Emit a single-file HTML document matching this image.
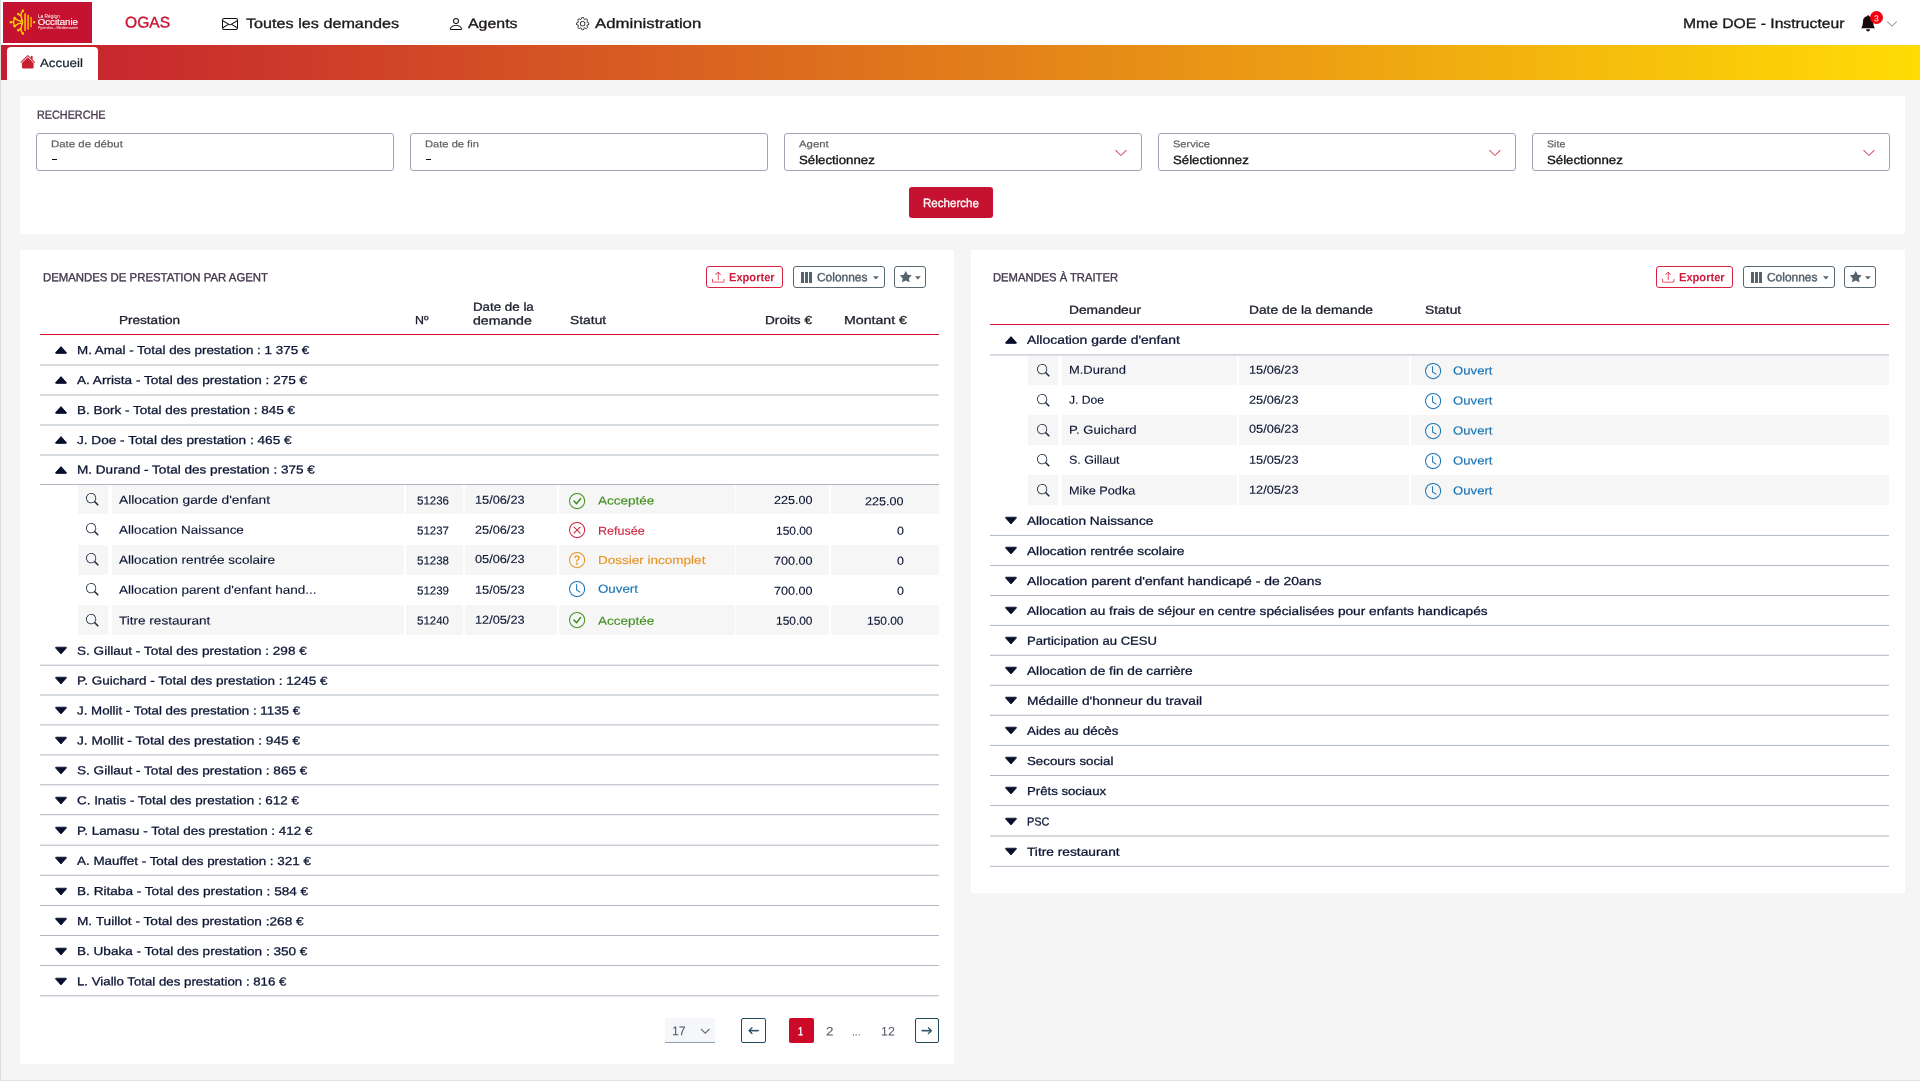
<!DOCTYPE html>
<html lang="fr"><head><meta charset="utf-8"><title>OGAS - Accueil</title><style>
*{box-sizing:border-box}
html,body{margin:0;padding:0}
body{width:1920px;height:1081px;position:relative;overflow:hidden;background:#f5f5f5;font-family:"Liberation Sans", sans-serif;color:#0b1432}
#app{position:absolute;left:0;top:0;width:1920px;height:1081px;background:#f5f5f5;will-change:transform}
.b,.t,.i{position:absolute}
.t{white-space:pre;line-height:20px;height:20px;font-kerning:normal;transform-origin:0 0}
.i{display:block;overflow:visible}
.ln{position:absolute;background:#d6dbe1;height:2px}
.sh{position:absolute;background:#f6f6f6}
</style></head><body>
<div id="app">
<header>
<div class="b" style="left:0.00px;top:0.00px;width:1920.00px;height:45.00px;background:#fff"></div>
<div class="b" style="left:3.00px;top:2.00px;width:89.00px;height:41.00px;background:#c41230"></div>
<svg class="i" style="left:3px;top:2px" width="89" height="41" viewBox="3 2 89 41">
<g fill="none" stroke="#ffd400" stroke-width="1.35" stroke-linecap="round" stroke-linejoin="round">
<path d="M22.9 10.8 L21.2 13.2 Q20.6 14.6 21.2 16.6 L21.9 19.6 Q22.2 21.2 20.6 21.2 L18 20.4 L14.7 18.1"/>
<path d="M18.3 14.1 L20.9 16"/>
<path d="M22.9 33.5 L21.2 31.1 Q20.6 29.7 21.2 27.7 L21.9 24.7 Q22.2 23.1 20.6 23.1 L18 23.9 L14.7 26.2"/>
<path d="M18.3 30.2 L20.9 28.3"/>
<path d="M11 22.15 L13.6 22.15 M14.7 18.1 L13.4 22.15 L14.7 26.2"/>
<path d="M21.6 19.5 L22.6 22.15 L21.6 24.8"/>
</g>
<g fill="#ffd400"><circle cx="22.9" cy="10.8" r="1.25"/><circle cx="18.2" cy="14" r="1.2"/><circle cx="14.6" cy="18" r="1.2"/><circle cx="10.9" cy="22.15" r="1.25"/><circle cx="14.6" cy="26.3" r="1.2"/><circle cx="18.2" cy="30.3" r="1.2"/><circle cx="22.9" cy="33.5" r="1.25"/><circle cx="34.1" cy="22.25" r="1.15"/></g>
<g fill="#f5a400"><rect x="24.1" y="13.3" width="1.9" height="17.7"/><rect x="27.2" y="14.8" width="1.8" height="14.8"/><rect x="30.3" y="16.9" width="1.6" height="10.2"/></g>
<g fill="#fff" font-family="Liberation Sans, sans-serif">
<text x="37.9" y="18.05" font-size="4.7" textLength="22" lengthAdjust="spacingAndGlyphs">La Région</text>
<text x="37.8" y="25.05" font-size="8.4" stroke="#fff" stroke-width="0.14" textLength="40.2" lengthAdjust="spacingAndGlyphs">Occitanie</text>
<text x="37.9" y="29.45" font-size="3.4" textLength="40.2" lengthAdjust="spacingAndGlyphs">Pyrénées - Méditerranée</text>
</g></svg>
<span class="t" style="left:125.10px;top:12px;font-size:15.4px;transform:translateY(0.60px) scaleX(1.0138) rotate(.03deg);color:#c8102e;-webkit-text-stroke:0.35px currentColor;">OGAS</span>
<nav>
<svg class="i" style="left:222.00px;top:16.30px" width="16" height="16" viewBox="0 0 16 16" fill="#111" ><path d="M0 4a2 2 0 0 1 2-2h12a2 2 0 0 1 2 2v8a2 2 0 0 1-2 2H2a2 2 0 0 1-2-2V4Zm2-1a1 1 0 0 0-1 1v.217l7 4.2 7-4.2V4a1 1 0 0 0-1-1H2Zm13 2.383-4.708 2.825L15 11.105V5.383Zm-.034 6.876-5.64-3.471L8 9.583l-1.326-.795-5.64 3.47A1 1 0 0 0 2 13h12a1 1 0 0 0 .966-.741ZM1 11.105l4.708-2.897L1 5.383v5.722Z"/></svg>
<span class="t" style="left:246.30px;top:13px;font-size:13.7px;transform:translateY(0.95px) scaleX(1.1828) rotate(.03deg);color:#1d1718;-webkit-text-stroke:0.32px currentColor;">Toutes les demandes</span>
<svg class="i" style="left:448.20px;top:15.70px" width="16" height="16" viewBox="0 0 16 16" fill="#111" ><path d="M8 8a3 3 0 1 0 0-6 3 3 0 0 0 0 6Zm2-3a2 2 0 1 1-4 0 2 2 0 0 1 4 0Zm4 8c0 1-1 1-1 1H3s-1 0-1-1 1-4 6-4 6 3 6 4Zm-1-.004c-.001-.246-.154-.986-.832-1.664C11.516 10.68 10.289 10 8 10c-2.29 0-3.516.68-4.168 1.332-.678.678-.83 1.418-.832 1.664h10Z"/></svg>
<span class="t" style="left:468.20px;top:13px;font-size:13.7px;transform:translateY(0.95px) scaleX(1.1636) rotate(.03deg);color:#1d1718;-webkit-text-stroke:0.32px currentColor;">Agents</span>
<svg class="i" style="left:575.60px;top:16.85px" width="13.3" height="13.3" viewBox="0 0 16 16" fill="#222" ><path d="M8 4.754a3.246 3.246 0 1 0 0 6.492 3.246 3.246 0 0 0 0-6.492zM5.754 8a2.246 2.246 0 1 1 4.492 0 2.246 2.246 0 0 1-4.492 0z"/><path d="M9.796 1.343c-.527-1.79-3.065-1.79-3.592 0l-.094.319a.873.873 0 0 1-1.255.52l-.292-.16c-1.64-.892-3.433.902-2.54 2.541l.159.292a.873.873 0 0 1-.52 1.255l-.319.094c-1.79.527-1.79 3.065 0 3.592l.319.094a.873.873 0 0 1 .52 1.255l-.16.292c-.892 1.64.901 3.434 2.541 2.54l.292-.159a.873.873 0 0 1 1.255.52l.094.319c.527 1.79 3.065 1.79 3.592 0l.094-.319a.873.873 0 0 1 1.255-.52l.292.16c1.64.893 3.434-.902 2.54-2.541l-.159-.292a.873.873 0 0 1 .52-1.255l.319-.094c1.79-.527 1.79-3.065 0-3.592l-.319-.094a.873.873 0 0 1-.52-1.255l.16-.292c.893-1.64-.902-3.433-2.541-2.54l-.292.159a.873.873 0 0 1-1.255-.52l-.094-.319zm-2.633.283c.246-.835 1.428-.835 1.674 0l.094.319a1.873 1.873 0 0 0 2.693 1.115l.291-.16c.764-.415 1.6.42 1.184 1.185l-.159.292a1.873 1.873 0 0 0 1.116 2.692l.318.094c.835.246.835 1.428 0 1.674l-.319.094a1.873 1.873 0 0 0-1.115 2.693l.16.291c.415.764-.42 1.6-1.185 1.184l-.291-.159a1.873 1.873 0 0 0-2.693 1.116l-.094.318c-.246.835-1.428.835-1.674 0l-.094-.319a1.873 1.873 0 0 0-2.692-1.115l-.292.16c-.764.415-1.6-.42-1.184-1.185l.159-.291A1.873 1.873 0 0 0 1.945 8.93l-.319-.094c-.835-.246-.835-1.428 0-1.674l.319-.094A1.873 1.873 0 0 0 3.06 4.377l-.16-.292c-.415-.764.42-1.6 1.185-1.184l.292.159a1.873 1.873 0 0 0 2.692-1.115l.094-.319z"/></svg>
<span class="t" style="left:595.00px;top:13px;font-size:13.7px;transform:translateY(0.95px) scaleX(1.2256) rotate(.03deg);color:#1d1718;-webkit-text-stroke:0.32px currentColor;">Administration</span>
</nav>
<span class="t" style="left:1682.50px;top:13px;font-size:13.7px;transform:translateY(0.95px) scaleX(1.1477) rotate(.03deg);color:#1d1718;-webkit-text-stroke:0.32px currentColor;">Mme DOE - Instructeur</span>
<svg class="i" style="left:1859.90px;top:14.60px" width="16.2" height="16.6" viewBox="0 0 16 16" fill="#150a0a" ><path d="M8 16a2 2 0 0 0 2-2H6a2 2 0 0 0 2 2zm.995-14.901a1 1 0 1 0-1.99 0A5.002 5.002 0 0 0 3 6c0 1.098-.5 6-2 7h14c-1.5-1-2-5.902-2-7 0-2.42-1.72-4.44-4.005-4.901z"/></svg>
<div class="b" style="left:1870.00px;top:11.00px;width:13.00px;height:13.00px;background:#f5000f;border-radius:50%"></div>
<span class="t" style="left:1874.30px;top:8px;font-size:8.5px;transform:translateY(0.20px) scaleX(0.9927) rotate(.03deg);color:#fff;">3</span>
<svg class="i" style="left:1886.20px;top:17.90px" width="12" height="12" viewBox="0 0 16 16" fill="#707b88" ><path fill-rule="evenodd" d="M1.646 4.646a.5.5 0 0 1 .708 0L8 10.293l5.646-5.647a.5.5 0 0 1 .708.708l-6 6a.5.5 0 0 1-.708 0l-6-6a.5.5 0 0 1 0-.708z"/></svg>
<div class="b" style="left:1.00px;top:45.00px;width:1919.00px;height:35.00px;background:linear-gradient(90deg,#c41d30,#ffdc05)"></div>
<div class="b" style="left:7.00px;top:47.00px;width:91.00px;height:33.00px;background:#fff;border-radius:4px 4px 0 0"></div>
<svg class="i" style="left:19.60px;top:53.80px" width="15.6" height="15.6" viewBox="0 0 16 16" fill="#c8202f" ><path fill-rule="evenodd" d="m8 3.293 6 6V13.5a1.5 1.5 0 0 1-1.5 1.5h-9A1.5 1.5 0 0 1 2 13.5V9.293l6-6zm5-.793V6l-2-2V2.5a.5.5 0 0 1 .5-.5h1a.5.5 0 0 1 .5.5z"/><path fill-rule="evenodd" d="M7.293 1.5a1 1 0 0 1 1.414 0l6.647 6.646a.5.5 0 0 1-.708.708L8 2.207 1.354 8.854a.5.5 0 1 1-.708-.708L7.293 1.5z"/></svg>
<span class="t" style="left:40.30px;top:52px;font-size:12px;transform:translateY(0.90px) scaleX(1.1089) rotate(.03deg);color:#152030;-webkit-text-stroke:0.2px currentColor;">Accueil</span>
</header>
<div class="b" style="left:0.00px;top:0.00px;width:1.00px;height:1081.00px;background:#dcdcdc"></div>
<div class="b" style="left:0.00px;top:1080.00px;width:1920.00px;height:1.00px;background:#e0e0e0"></div>
<section>
<div class="b" style="left:20.00px;top:96.00px;width:1885.00px;height:138.00px;background:#fff"></div>
<span class="t" style="left:36.60px;top:104px;font-size:11.7px;transform:translateY(0.75px) scaleX(0.9253) rotate(.03deg);color:#47394f;-webkit-text-stroke:0.3px currentColor;">RECHERCHE</span>
<div class="b" style="left:36.00px;top:133.00px;width:358.00px;height:37.50px;background:#fff;border:1px solid #a2a0bb;border-radius:3px"></div>
<span class="t" style="left:50.80px;top:134px;font-size:9.7px;transform:translateY(0.20px) scaleX(1.1811) rotate(.03deg);color:#606060;-webkit-text-stroke:0.2px currentColor;">Date de début</span>
<div class="b" style="left:51.90px;top:158.90px;width:5.20px;height:1.40px;background:#111"></div>
<div class="b" style="left:410.00px;top:133.00px;width:358.00px;height:37.50px;background:#fff;border:1px solid #a2a0bb;border-radius:3px"></div>
<span class="t" style="left:425.30px;top:134px;font-size:9.7px;transform:translateY(0.20px) scaleX(1.1503) rotate(.03deg);color:#606060;-webkit-text-stroke:0.2px currentColor;">Date de fin</span>
<div class="b" style="left:425.90px;top:158.90px;width:5.20px;height:1.40px;background:#111"></div>
<div class="b" style="left:784.00px;top:133.00px;width:358.00px;height:37.50px;background:#fff;border:1px solid #a2a0bb;border-radius:3px"></div>
<span class="t" style="left:799.20px;top:134px;font-size:9.7px;transform:translateY(0.20px) scaleX(1.1726) rotate(.03deg);color:#606060;-webkit-text-stroke:0.2px currentColor;">Agent</span>
<span class="t" style="left:799.20px;top:149px;font-size:12px;transform:translateY(0.90px) scaleX(1.1030) rotate(.03deg);color:#141414;-webkit-text-stroke:0.35px currentColor;">Sélectionnez</span>
<svg class="i" style="left:1113.95px;top:146.45px" width="13.9" height="13.9" viewBox="0 0 16 16" fill="#d8334f" ><path fill-rule="evenodd" d="M1.646 4.646a.5.5 0 0 1 .708 0L8 10.293l5.646-5.647a.5.5 0 0 1 .708.708l-6 6a.5.5 0 0 1-.708 0l-6-6a.5.5 0 0 1 0-.708z"/></svg>
<div class="b" style="left:1158.00px;top:133.00px;width:358.00px;height:37.50px;background:#fff;border:1px solid #a2a0bb;border-radius:3px"></div>
<span class="t" style="left:1173.20px;top:134px;font-size:9.7px;transform:translateY(0.20px) scaleX(1.1389) rotate(.03deg);color:#606060;-webkit-text-stroke:0.2px currentColor;">Service</span>
<span class="t" style="left:1173.20px;top:149px;font-size:12px;transform:translateY(0.90px) scaleX(1.1030) rotate(.03deg);color:#141414;-webkit-text-stroke:0.35px currentColor;">Sélectionnez</span>
<svg class="i" style="left:1487.95px;top:146.45px" width="13.9" height="13.9" viewBox="0 0 16 16" fill="#d8334f" ><path fill-rule="evenodd" d="M1.646 4.646a.5.5 0 0 1 .708 0L8 10.293l5.646-5.647a.5.5 0 0 1 .708.708l-6 6a.5.5 0 0 1-.708 0l-6-6a.5.5 0 0 1 0-.708z"/></svg>
<div class="b" style="left:1532.00px;top:133.00px;width:358.00px;height:37.50px;background:#fff;border:1px solid #a2a0bb;border-radius:3px"></div>
<span class="t" style="left:1547.20px;top:134px;font-size:9.7px;transform:translateY(0.20px) scaleX(1.0956) rotate(.03deg);color:#606060;-webkit-text-stroke:0.2px currentColor;">Site</span>
<span class="t" style="left:1547.20px;top:149px;font-size:12px;transform:translateY(0.90px) scaleX(1.1030) rotate(.03deg);color:#141414;-webkit-text-stroke:0.35px currentColor;">Sélectionnez</span>
<svg class="i" style="left:1861.95px;top:146.45px" width="13.9" height="13.9" viewBox="0 0 16 16" fill="#d8334f" ><path fill-rule="evenodd" d="M1.646 4.646a.5.5 0 0 1 .708 0L8 10.293l5.646-5.647a.5.5 0 0 1 .708.708l-6 6a.5.5 0 0 1-.708 0l-6-6a.5.5 0 0 1 0-.708z"/></svg>
<div class="b" style="left:909.00px;top:187.00px;width:84.00px;height:31.00px;background:#c41230;border-radius:3px"></div>
<span class="t" style="left:922.50px;top:193px;font-size:12px;transform:translateY(0.10px) scaleX(0.9650) rotate(.03deg);color:#fff;-webkit-text-stroke:0.3px currentColor;">Recherche</span>
</section>
<section>
<div class="b" style="left:20.00px;top:250.00px;width:934.00px;height:814.00px;background:#fff"></div>
<span class="t" style="left:43.00px;top:267px;font-size:11.7px;transform:translateY(0.20px) scaleX(0.9732) rotate(.03deg);color:#43374b;-webkit-text-stroke:0.35px currentColor;">DEMANDES DE PRESTATION PAR AGENT</span>
<div class="b" style="left:706.00px;top:266.00px;width:76.50px;height:22.00px;border:1px solid #d8213f;border-radius:3px;background:#fff"></div>
<svg class="i" style="left:711.80px;top:270.60px" width="12.4" height="12.4" viewBox="0 0 16 16" fill="#d8213f" ><path d="M.5 9.9a.5.5 0 0 1 .5.5v2.5a1 1 0 0 0 1 1h12a1 1 0 0 0 1-1v-2.5a.5.5 0 0 1 1 0v2.5a2 2 0 0 1-2 2H2a2 2 0 0 1-2-2v-2.5a.5.5 0 0 1 .5-.5z"/><path d="M7.646 1.146a.5.5 0 0 1 .708 0l3 3a.5.5 0 0 1-.708.708L8.500 2.707V11.5a.5.5 0 0 1-1 0V2.707L5.354 4.854a.5.5 0 1 1-.708-.708l3-3z"/></svg>
<span class="t" style="left:729.30px;top:267px;font-size:12px;transform:translateY(0.30px) scaleX(0.9259) rotate(.03deg);color:#cf1838;font-weight:700;">Exporter</span>
<div class="b" style="left:793.00px;top:266.00px;width:92.00px;height:22.00px;border:1px solid #5a6872;border-radius:3px;background:#fff"></div>
<div class="b" style="left:801.10px;top:272.00px;width:2.70px;height:10.70px;background:#55636d"></div>
<div class="b" style="left:805.15px;top:272.00px;width:2.70px;height:10.70px;background:#55636d"></div>
<div class="b" style="left:809.20px;top:272.00px;width:2.70px;height:10.70px;background:#55636d"></div>
<span class="t" style="left:817.00px;top:267px;font-size:12px;transform:translateY(0.30px) scaleX(0.9960) rotate(.03deg);color:#4f5d67;-webkit-text-stroke:0.4px currentColor;">Colonnes</span>
<svg class="i" style="left:872.9px;top:275.8px" width="5.8" height="3.6" viewBox="0 0 7 4"><path d="M0 0h7L3.5 4z" fill="#55636d"/></svg>
<div class="b" style="left:894.00px;top:266.00px;width:32.00px;height:22.00px;border:1px solid #5a6872;border-radius:3px;background:#fff"></div>
<svg class="i" style="left:900.00px;top:270.70px" width="11.5" height="11.5" viewBox="0 0 16 16" fill="#55636d" ><path d="M3.612 15.443c-.386.198-.824-.149-.746-.592l.83-4.73L.173 6.765c-.329-.314-.158-.888.283-.95l4.898-.696L7.538.792c.197-.39.73-.39.927 0l2.184 4.327 4.898.696c.441.062.612.636.282.95l-3.522 3.356.83 4.73c.078.443-.36.79-.746.592L8 13.187l-4.389 2.256z"/></svg>
<svg class="i" style="left:914.9px;top:275.8px" width="5.8" height="3.6" viewBox="0 0 7 4"><path d="M0 0h7L3.5 4z" fill="#55636d"/></svg>
<span class="t" style="left:119.00px;top:309px;font-size:11.6px;transform:translateY(0.90px) scaleX(1.1685) rotate(.03deg);color:#1b1f2b;-webkit-text-stroke:0.3px currentColor;">Prestation</span>
<span class="t" style="left:414.50px;top:309px;font-size:11.6px;transform:translateY(0.90px) scaleX(1.0706) rotate(.03deg);color:#1b1f2b;-webkit-text-stroke:0.3px currentColor;">Nº</span>
<span class="t" style="left:472.50px;top:296px;font-size:11.6px;transform:translateY(0.80px) scaleX(1.1502) rotate(.03deg);color:#1b1f2b;-webkit-text-stroke:0.3px currentColor;">Date de la</span>
<span class="t" style="left:472.50px;top:310px;font-size:11.6px;transform:translateY(0.40px) scaleX(1.2159) rotate(.03deg);color:#1b1f2b;-webkit-text-stroke:0.3px currentColor;">demande</span>
<span class="t" style="left:570.00px;top:309px;font-size:11.6px;transform:translateY(0.90px) scaleX(1.1948) rotate(.03deg);color:#1b1f2b;-webkit-text-stroke:0.3px currentColor;">Statut</span>
<span class="t" style="left:765.00px;top:309px;font-size:11.6px;transform:translateY(0.90px) scaleX(1.1764) rotate(.03deg);color:#1b1f2b;-webkit-text-stroke:0.3px currentColor;">Droits €</span>
<span class="t" style="left:844.00px;top:309px;font-size:11.6px;transform:translateY(0.90px) scaleX(1.2218) rotate(.03deg);color:#1b1f2b;-webkit-text-stroke:0.3px currentColor;">Montant €</span>
<div class="b" style="left:40.00px;top:334.00px;width:899.00px;height:1.30px;background:#d8102f"></div>
<div class="b" style="left:40px;top:364px;width:899px;height:1px;background:rgba(174,183,194,0.50)"></div><div class="b" style="left:40px;top:365px;width:899px;height:1px;background:rgba(174,183,194,0.50)"></div>
<div class="b" style="left:40px;top:394px;width:899px;height:1px;background:rgba(174,183,194,0.50)"></div><div class="b" style="left:40px;top:395px;width:899px;height:1px;background:rgba(174,183,194,0.50)"></div>
<div class="b" style="left:40px;top:424px;width:899px;height:1px;background:rgba(174,183,194,0.50)"></div><div class="b" style="left:40px;top:425px;width:899px;height:1px;background:rgba(174,183,194,0.50)"></div>
<div class="b" style="left:40px;top:454px;width:899px;height:1px;background:rgba(174,183,194,0.50)"></div><div class="b" style="left:40px;top:455px;width:899px;height:1px;background:rgba(174,183,194,0.50)"></div>
<div class="b" style="left:40px;top:484px;width:899px;height:1px;background:rgba(174,183,194,1.00)"></div>
<div class="b" style="left:40px;top:664px;width:899px;height:1px;background:rgba(174,183,194,0.30)"></div><div class="b" style="left:40px;top:665px;width:899px;height:1px;background:rgba(174,183,194,0.70)"></div>
<div class="b" style="left:40px;top:694px;width:899px;height:1px;background:rgba(174,183,194,0.50)"></div><div class="b" style="left:40px;top:695px;width:899px;height:1px;background:rgba(174,183,194,0.50)"></div>
<div class="b" style="left:40px;top:724px;width:899px;height:1px;background:rgba(174,183,194,0.60)"></div><div class="b" style="left:40px;top:725px;width:899px;height:1px;background:rgba(174,183,194,0.40)"></div>
<div class="b" style="left:40px;top:754px;width:899px;height:1px;background:rgba(174,183,194,0.60)"></div><div class="b" style="left:40px;top:755px;width:899px;height:1px;background:rgba(174,183,194,0.40)"></div>
<div class="b" style="left:40px;top:784px;width:899px;height:1px;background:rgba(174,183,194,0.70)"></div><div class="b" style="left:40px;top:785px;width:899px;height:1px;background:rgba(174,183,194,0.30)"></div>
<div class="b" style="left:40px;top:814px;width:899px;height:1px;background:rgba(174,183,194,0.80)"></div><div class="b" style="left:40px;top:815px;width:899px;height:1px;background:rgba(174,183,194,0.20)"></div>
<div class="b" style="left:40px;top:844px;width:899px;height:1px;background:rgba(174,183,194,0.30)"></div><div class="b" style="left:40px;top:845px;width:899px;height:1px;background:rgba(174,183,194,0.70)"></div>
<div class="b" style="left:40px;top:874px;width:899px;height:1px;background:rgba(174,183,194,0.20)"></div><div class="b" style="left:40px;top:875px;width:899px;height:1px;background:rgba(174,183,194,0.80)"></div>
<div class="b" style="left:40px;top:905px;width:899px;height:1px;background:rgba(174,183,194,1.00)"></div>
<div class="b" style="left:40px;top:935px;width:899px;height:1px;background:rgba(174,183,194,1.00)"></div>
<div class="b" style="left:40px;top:965px;width:899px;height:1px;background:rgba(174,183,194,1.00)"></div>
<div class="b" style="left:40px;top:995px;width:899px;height:1px;background:rgba(174,183,194,0.70)"></div><div class="b" style="left:40px;top:996px;width:899px;height:1px;background:rgba(174,183,194,0.30)"></div>
<svg class="i" style="left:55.00px;top:346.00px" width="12" height="7.6" viewBox="0 0 12 7.6"><path d="M6 0.6 L11.4 6.6 Q11.7 7.4 10.8 7.4 L1.2 7.4 Q0.3 7.4 0.6 6.6 Z" fill="#060e2b" stroke="#060e2b" stroke-width="0.8" stroke-linejoin="round"/></svg>
<span class="t" style="left:77.30px;top:340px;font-size:11.6px;transform:translateY(0.00px) scaleX(1.1565) rotate(.03deg);color:#0b1432;-webkit-text-stroke:0.27px currentColor;">M. Amal - Total des prestation : 1 375 €</span>
<svg class="i" style="left:55.00px;top:376.00px" width="12" height="7.6" viewBox="0 0 12 7.6"><path d="M6 0.6 L11.4 6.6 Q11.7 7.4 10.8 7.4 L1.2 7.4 Q0.3 7.4 0.6 6.6 Z" fill="#060e2b" stroke="#060e2b" stroke-width="0.8" stroke-linejoin="round"/></svg>
<span class="t" style="left:77.30px;top:370px;font-size:11.6px;transform:translateY(0.00px) scaleX(1.1724) rotate(.03deg);color:#0b1432;-webkit-text-stroke:0.27px currentColor;">A. Arrista - Total des prestation : 275 €</span>
<svg class="i" style="left:55.00px;top:406.00px" width="12" height="7.6" viewBox="0 0 12 7.6"><path d="M6 0.6 L11.4 6.6 Q11.7 7.4 10.8 7.4 L1.2 7.4 Q0.3 7.4 0.6 6.6 Z" fill="#060e2b" stroke="#060e2b" stroke-width="0.8" stroke-linejoin="round"/></svg>
<span class="t" style="left:77.30px;top:400px;font-size:11.6px;transform:translateY(0.00px) scaleX(1.1643) rotate(.03deg);color:#0b1432;-webkit-text-stroke:0.27px currentColor;">B. Bork - Total des prestation : 845 €</span>
<svg class="i" style="left:55.00px;top:436.00px" width="12" height="7.6" viewBox="0 0 12 7.6"><path d="M6 0.6 L11.4 6.6 Q11.7 7.4 10.8 7.4 L1.2 7.4 Q0.3 7.4 0.6 6.6 Z" fill="#060e2b" stroke="#060e2b" stroke-width="0.8" stroke-linejoin="round"/></svg>
<span class="t" style="left:77.30px;top:430px;font-size:11.6px;transform:translateY(0.00px) scaleX(1.1738) rotate(.03deg);color:#0b1432;-webkit-text-stroke:0.27px currentColor;">J. Doe - Total des prestation : 465 €</span>
<svg class="i" style="left:55.00px;top:465.50px" width="12" height="7.6" viewBox="0 0 12 7.6"><path d="M6 0.6 L11.4 6.6 Q11.7 7.4 10.8 7.4 L1.2 7.4 Q0.3 7.4 0.6 6.6 Z" fill="#060e2b" stroke="#060e2b" stroke-width="0.8" stroke-linejoin="round"/></svg>
<span class="t" style="left:77.30px;top:459px;font-size:11.6px;transform:translateY(0.50px) scaleX(1.1694) rotate(.03deg);color:#0b1432;-webkit-text-stroke:0.27px currentColor;">M. Durand - Total des prestation : 375 €</span>
<svg class="i" style="left:55.00px;top:647.30px" width="12" height="7.6" viewBox="0 0 12 7.6"><path d="M6 7 L11.4 1 Q11.7 0.2 10.8 0.2 L1.2 0.2 Q0.3 0.2 0.6 1 Z" fill="#060e2b" stroke="#060e2b" stroke-width="0.8" stroke-linejoin="round"/></svg>
<span class="t" style="left:77.30px;top:640px;font-size:11.6px;transform:translateY(0.75px) scaleX(1.1703) rotate(.03deg);color:#0b1432;-webkit-text-stroke:0.27px currentColor;">S. Gillaut - Total des prestation : 298 €</span>
<svg class="i" style="left:55.00px;top:677.10px" width="12" height="7.6" viewBox="0 0 12 7.6"><path d="M6 7 L11.4 1 Q11.7 0.2 10.8 0.2 L1.2 0.2 Q0.3 0.2 0.6 1 Z" fill="#060e2b" stroke="#060e2b" stroke-width="0.8" stroke-linejoin="round"/></svg>
<span class="t" style="left:77.30px;top:670px;font-size:11.6px;transform:translateY(0.55px) scaleX(1.1630) rotate(.03deg);color:#0b1432;-webkit-text-stroke:0.27px currentColor;">P. Guichard - Total des prestation : 1245 €</span>
<svg class="i" style="left:55.00px;top:707.00px" width="12" height="7.6" viewBox="0 0 12 7.6"><path d="M6 7 L11.4 1 Q11.7 0.2 10.8 0.2 L1.2 0.2 Q0.3 0.2 0.6 1 Z" fill="#060e2b" stroke="#060e2b" stroke-width="0.8" stroke-linejoin="round"/></svg>
<span class="t" style="left:77.30px;top:700px;font-size:11.6px;transform:translateY(0.45px) scaleX(1.1488) rotate(.03deg);color:#0b1432;-webkit-text-stroke:0.27px currentColor;">J. Mollit - Total des prestation : 1135 €</span>
<svg class="i" style="left:55.00px;top:737.00px" width="12" height="7.6" viewBox="0 0 12 7.6"><path d="M6 7 L11.4 1 Q11.7 0.2 10.8 0.2 L1.2 0.2 Q0.3 0.2 0.6 1 Z" fill="#060e2b" stroke="#060e2b" stroke-width="0.8" stroke-linejoin="round"/></svg>
<span class="t" style="left:77.30px;top:730px;font-size:11.6px;transform:translateY(0.45px) scaleX(1.1829) rotate(.03deg);color:#0b1432;-webkit-text-stroke:0.27px currentColor;">J. Mollit - Total des prestation : 945 €</span>
<svg class="i" style="left:55.00px;top:766.90px" width="12" height="7.6" viewBox="0 0 12 7.6"><path d="M6 7 L11.4 1 Q11.7 0.2 10.8 0.2 L1.2 0.2 Q0.3 0.2 0.6 1 Z" fill="#060e2b" stroke="#060e2b" stroke-width="0.8" stroke-linejoin="round"/></svg>
<span class="t" style="left:77.30px;top:760px;font-size:11.6px;transform:translateY(0.35px) scaleX(1.1734) rotate(.03deg);color:#0b1432;-webkit-text-stroke:0.27px currentColor;">S. Gillaut - Total des prestation : 865 €</span>
<svg class="i" style="left:55.00px;top:796.80px" width="12" height="7.6" viewBox="0 0 12 7.6"><path d="M6 7 L11.4 1 Q11.7 0.2 10.8 0.2 L1.2 0.2 Q0.3 0.2 0.6 1 Z" fill="#060e2b" stroke="#060e2b" stroke-width="0.8" stroke-linejoin="round"/></svg>
<span class="t" style="left:77.30px;top:790px;font-size:11.6px;transform:translateY(0.25px) scaleX(1.1567) rotate(.03deg);color:#0b1432;-webkit-text-stroke:0.27px currentColor;">C. Inatis - Total des prestation : 612 €</span>
<svg class="i" style="left:55.00px;top:827.30px" width="12" height="7.6" viewBox="0 0 12 7.6"><path d="M6 7 L11.4 1 Q11.7 0.2 10.8 0.2 L1.2 0.2 Q0.3 0.2 0.6 1 Z" fill="#060e2b" stroke="#060e2b" stroke-width="0.8" stroke-linejoin="round"/></svg>
<span class="t" style="left:77.30px;top:820px;font-size:11.6px;transform:translateY(0.75px) scaleX(1.1583) rotate(.03deg);color:#0b1432;-webkit-text-stroke:0.27px currentColor;">P. Lamasu - Total des prestation : 412 €</span>
<svg class="i" style="left:55.00px;top:857.40px" width="12" height="7.6" viewBox="0 0 12 7.6"><path d="M6 7 L11.4 1 Q11.7 0.2 10.8 0.2 L1.2 0.2 Q0.3 0.2 0.6 1 Z" fill="#060e2b" stroke="#060e2b" stroke-width="0.8" stroke-linejoin="round"/></svg>
<span class="t" style="left:77.30px;top:850px;font-size:11.6px;transform:translateY(0.85px) scaleX(1.1584) rotate(.03deg);color:#0b1432;-webkit-text-stroke:0.27px currentColor;">A. Mauffet - Total des prestation : 321 €</span>
<svg class="i" style="left:55.00px;top:887.60px" width="12" height="7.6" viewBox="0 0 12 7.6"><path d="M6 7 L11.4 1 Q11.7 0.2 10.8 0.2 L1.2 0.2 Q0.3 0.2 0.6 1 Z" fill="#060e2b" stroke="#060e2b" stroke-width="0.8" stroke-linejoin="round"/></svg>
<span class="t" style="left:77.30px;top:881px;font-size:11.6px;transform:translateY(0.05px) scaleX(1.1736) rotate(.03deg);color:#0b1432;-webkit-text-stroke:0.27px currentColor;">B. Ritaba - Total des prestation : 584 €</span>
<svg class="i" style="left:55.00px;top:917.60px" width="12" height="7.6" viewBox="0 0 12 7.6"><path d="M6 7 L11.4 1 Q11.7 0.2 10.8 0.2 L1.2 0.2 Q0.3 0.2 0.6 1 Z" fill="#060e2b" stroke="#060e2b" stroke-width="0.8" stroke-linejoin="round"/></svg>
<span class="t" style="left:77.30px;top:911px;font-size:11.6px;transform:translateY(0.05px) scaleX(1.1778) rotate(.03deg);color:#0b1432;-webkit-text-stroke:0.27px currentColor;">M. Tuillot - Total des prestation :268 €</span>
<svg class="i" style="left:55.00px;top:947.60px" width="12" height="7.6" viewBox="0 0 12 7.6"><path d="M6 7 L11.4 1 Q11.7 0.2 10.8 0.2 L1.2 0.2 Q0.3 0.2 0.6 1 Z" fill="#060e2b" stroke="#060e2b" stroke-width="0.8" stroke-linejoin="round"/></svg>
<span class="t" style="left:77.30px;top:941px;font-size:11.6px;transform:translateY(0.05px) scaleX(1.1695) rotate(.03deg);color:#0b1432;-webkit-text-stroke:0.27px currentColor;">B. Ubaka - Total des prestation : 350 €</span>
<svg class="i" style="left:55.00px;top:977.90px" width="12" height="7.6" viewBox="0 0 12 7.6"><path d="M6 7 L11.4 1 Q11.7 0.2 10.8 0.2 L1.2 0.2 Q0.3 0.2 0.6 1 Z" fill="#060e2b" stroke="#060e2b" stroke-width="0.8" stroke-linejoin="round"/></svg>
<span class="t" style="left:77.30px;top:971px;font-size:11.6px;transform:translateY(0.35px) scaleX(1.1426) rotate(.03deg);color:#0b1432;-webkit-text-stroke:0.27px currentColor;">L. Viallo Total des prestation : 816 €</span>
<div class="sh" style="left:78px;top:485.4px;width:29.50px;height:28.90px"></div>
<div class="sh" style="left:112px;top:485.4px;width:291.80px;height:28.90px"></div>
<div class="sh" style="left:406.2px;top:485.4px;width:56.40px;height:28.90px"></div>
<div class="sh" style="left:465px;top:485.4px;width:92.00px;height:28.90px"></div>
<div class="sh" style="left:559px;top:485.4px;width:175.50px;height:28.90px"></div>
<div class="sh" style="left:736.4px;top:485.4px;width:92.90px;height:28.90px"></div>
<div class="sh" style="left:831px;top:485.4px;width:107.80px;height:28.90px"></div>
<div class="sh" style="left:78px;top:545px;width:29.50px;height:29.50px"></div>
<div class="sh" style="left:112px;top:545px;width:291.80px;height:29.50px"></div>
<div class="sh" style="left:406.2px;top:545px;width:56.40px;height:29.50px"></div>
<div class="sh" style="left:465px;top:545px;width:92.00px;height:29.50px"></div>
<div class="sh" style="left:559px;top:545px;width:175.50px;height:29.50px"></div>
<div class="sh" style="left:736.4px;top:545px;width:92.90px;height:29.50px"></div>
<div class="sh" style="left:831px;top:545px;width:107.80px;height:29.50px"></div>
<div class="sh" style="left:78px;top:605px;width:29.50px;height:29.50px"></div>
<div class="sh" style="left:112px;top:605px;width:291.80px;height:29.50px"></div>
<div class="sh" style="left:406.2px;top:605px;width:56.40px;height:29.50px"></div>
<div class="sh" style="left:465px;top:605px;width:92.00px;height:29.50px"></div>
<div class="sh" style="left:559px;top:605px;width:175.50px;height:29.50px"></div>
<div class="sh" style="left:736.4px;top:605px;width:92.90px;height:29.50px"></div>
<div class="sh" style="left:831px;top:605px;width:107.80px;height:29.50px"></div>
<svg class="i" style="left:86.30px;top:493.10px" width="12.6" height="12.6" viewBox="0 0 16 16" fill="#1c2740" ><path d="M11.742 10.344a6.5 6.5 0 1 0-1.397 1.398h-.001c.03.04.062.078.098.115l3.85 3.85a1 1 0 0 0 1.415-1.414l-3.85-3.85a1.007 1.007 0 0 0-.115-.1zM12 6.5a5.5 5.5 0 1 1-11 0 5.5 5.5 0 0 1 11 0z"/></svg>
<span class="t" style="left:119.40px;top:489px;font-size:11.6px;transform:translateY(0.75px) scaleX(1.1873) rotate(.03deg);color:#0b1432;-webkit-text-stroke:0.12px currentColor;">Allocation garde d'enfant</span>
<span class="t" style="left:417.00px;top:490px;font-size:11.6px;transform:translateY(0.50px) scaleX(0.9922) rotate(.03deg);color:#0b1432;-webkit-text-stroke:0.12px currentColor;">51236</span>
<span class="t" style="left:475.00px;top:489px;font-size:11.6px;transform:translateY(0.75px) scaleX(1.0988) rotate(.03deg);color:#0b1432;-webkit-text-stroke:0.12px currentColor;">15/06/23</span>
<svg class="i" style="left:569.10px;top:492.50px" width="16.2" height="16.2" viewBox="0 0 16 16" fill="#3f8f1f"><path d="M8 15A7 7 0 1 1 8 1a7 7 0 0 1 0 14zm0 1A8 8 0 1 0 8 0a8 8 0 0 0 0 16z"/><path d="M10.97 4.97a.235.235 0 0 0-.02.022L7.477 9.417 5.384 7.323a.75.75 0 0 0-1.06 1.06L6.97 11.03a.75.75 0 0 0 1.079-.02l3.992-4.99a.75.75 0 0 0-1.071-1.05z"/></svg>
<span class="t" style="left:598.30px;top:490px;font-size:11.6px;transform:translateY(0.55px) scaleX(1.1646) rotate(.03deg);color:#3f8f1f;-webkit-text-stroke:0.12px currentColor;">Acceptée</span>
<span class="t" style="left:774.20px;top:490px;font-size:11.6px;transform:translateY(0.00px) scaleX(1.0855) rotate(.03deg);color:#0b1432;-webkit-text-stroke:0.12px currentColor;">225.00</span>
<span class="t" style="left:865.20px;top:491px;font-size:11.6px;transform:translateY(0.20px) scaleX(1.0855) rotate(.03deg);color:#0b1432;-webkit-text-stroke:0.12px currentColor;">225.00</span>
<svg class="i" style="left:86.30px;top:523.10px" width="12.6" height="12.6" viewBox="0 0 16 16" fill="#1c2740" ><path d="M11.742 10.344a6.5 6.5 0 1 0-1.397 1.398h-.001c.03.04.062.078.098.115l3.85 3.85a1 1 0 0 0 1.415-1.414l-3.85-3.85a1.007 1.007 0 0 0-.115-.1zM12 6.5a5.5 5.5 0 1 1-11 0 5.5 5.5 0 0 1 11 0z"/></svg>
<span class="t" style="left:119.40px;top:519px;font-size:11.6px;transform:translateY(0.75px) scaleX(1.1600) rotate(.03deg);color:#0b1432;-webkit-text-stroke:0.12px currentColor;">Allocation Naissance</span>
<span class="t" style="left:417.00px;top:520px;font-size:11.6px;transform:translateY(0.50px) scaleX(0.9922) rotate(.03deg);color:#0b1432;-webkit-text-stroke:0.12px currentColor;">51237</span>
<span class="t" style="left:475.00px;top:519px;font-size:11.6px;transform:translateY(0.75px) scaleX(1.0988) rotate(.03deg);color:#0b1432;-webkit-text-stroke:0.12px currentColor;">25/06/23</span>
<svg class="i" style="left:569.10px;top:522.20px" width="16.2" height="16.2" viewBox="0 0 16 16" fill="#cf2340"><path d="M8 15A7 7 0 1 1 8 1a7 7 0 0 1 0 14zm0 1A8 8 0 1 0 8 0a8 8 0 0 0 0 16z"/><path d="M4.646 4.646a.5.5 0 0 1 .708 0L8 7.293l2.646-2.647a.5.5 0 0 1 .708.708L8.707 8l2.647 2.646a.5.5 0 0 1-.708.708L8 8.707l-2.646 2.647a.5.5 0 0 1-.708-.708L7.293 8 4.646 5.354a.5.5 0 0 1 0-.708z"/></svg>
<span class="t" style="left:598.30px;top:520px;font-size:11.6px;transform:translateY(0.70px) scaleX(1.0813) rotate(.03deg);color:#cf2340;-webkit-text-stroke:0.12px currentColor;">Refusée</span>
<span class="t" style="left:776.20px;top:520px;font-size:11.6px;transform:translateY(0.70px) scaleX(1.0291) rotate(.03deg);color:#0b1432;-webkit-text-stroke:0.12px currentColor;">150.00</span>
<span class="t" style="left:896.80px;top:520px;font-size:11.6px;transform:translateY(0.70px) scaleX(1.0692) rotate(.03deg);color:#0b1432;-webkit-text-stroke:0.12px currentColor;">0</span>
<svg class="i" style="left:86.30px;top:553.10px" width="12.6" height="12.6" viewBox="0 0 16 16" fill="#1c2740" ><path d="M11.742 10.344a6.5 6.5 0 1 0-1.397 1.398h-.001c.03.04.062.078.098.115l3.85 3.85a1 1 0 0 0 1.415-1.414l-3.85-3.85a1.007 1.007 0 0 0-.115-.1zM12 6.5a5.5 5.5 0 1 1-11 0 5.5 5.5 0 0 1 11 0z"/></svg>
<span class="t" style="left:119.40px;top:549px;font-size:11.6px;transform:translateY(0.75px) scaleX(1.1701) rotate(.03deg);color:#0b1432;-webkit-text-stroke:0.12px currentColor;">Allocation rentrée scolaire</span>
<span class="t" style="left:417.00px;top:550px;font-size:11.6px;transform:translateY(0.50px) scaleX(0.9922) rotate(.03deg);color:#0b1432;-webkit-text-stroke:0.12px currentColor;">51238</span>
<span class="t" style="left:475.00px;top:549px;font-size:11.6px;transform:translateY(0.00px) scaleX(1.0988) rotate(.03deg);color:#0b1432;-webkit-text-stroke:0.12px currentColor;">05/06/23</span>
<svg class="i" style="left:569.10px;top:551.60px" width="16.2" height="16.2" viewBox="0 0 16 16" fill="#e89320"><path d="M8 15A7 7 0 1 1 8 1a7 7 0 0 1 0 14zm0 1A8 8 0 1 0 8 0a8 8 0 0 0 0 16z"/><path d="M5.255 5.786a.237.237 0 0 0 .241.247h.825c.138 0 .248-.113.266-.25.09-.656.54-1.134 1.342-1.134.686 0 1.314.343 1.314 1.168 0 .635-.374.927-.965 1.371-.673.489-1.206 1.06-1.168 1.987l.003.217a.25.25 0 0 0 .25.246h.811a.25.25 0 0 0 .25-.25v-.105c0-.718.273-.927 1.01-1.486.609-.463 1.244-.977 1.244-2.056 0-1.511-1.276-2.241-2.673-2.241-1.267 0-2.655.59-2.75 2.286zm1.557 5.763c0 .533.425.927 1.01.927.609 0 1.028-.394 1.028-.927 0-.552-.42-.94-1.029-.94-.584 0-1.009.388-1.009.94z"/></svg>
<span class="t" style="left:598.30px;top:550px;font-size:11.6px;transform:translateY(0.00px) scaleX(1.1656) rotate(.03deg);color:#e89320;-webkit-text-stroke:0.12px currentColor;">Dossier incomplet</span>
<span class="t" style="left:774.20px;top:550px;font-size:11.6px;transform:translateY(0.70px) scaleX(1.0855) rotate(.03deg);color:#0b1432;-webkit-text-stroke:0.12px currentColor;">700.00</span>
<span class="t" style="left:896.80px;top:550px;font-size:11.6px;transform:translateY(0.70px) scaleX(1.0692) rotate(.03deg);color:#0b1432;-webkit-text-stroke:0.12px currentColor;">0</span>
<svg class="i" style="left:86.30px;top:583.10px" width="12.6" height="12.6" viewBox="0 0 16 16" fill="#1c2740" ><path d="M11.742 10.344a6.5 6.5 0 1 0-1.397 1.398h-.001c.03.04.062.078.098.115l3.85 3.85a1 1 0 0 0 1.415-1.414l-3.85-3.85a1.007 1.007 0 0 0-.115-.1zM12 6.5a5.5 5.5 0 1 1-11 0 5.5 5.5 0 0 1 11 0z"/></svg>
<span class="t" style="left:119.40px;top:579px;font-size:11.6px;transform:translateY(0.75px) scaleX(1.1680) rotate(.03deg);color:#0b1432;-webkit-text-stroke:0.12px currentColor;">Allocation parent d'enfant hand...</span>
<span class="t" style="left:417.00px;top:580px;font-size:11.6px;transform:translateY(0.50px) scaleX(0.9922) rotate(.03deg);color:#0b1432;-webkit-text-stroke:0.12px currentColor;">51239</span>
<span class="t" style="left:475.00px;top:579px;font-size:11.6px;transform:translateY(0.75px) scaleX(1.0988) rotate(.03deg);color:#0b1432;-webkit-text-stroke:0.12px currentColor;">15/05/23</span>
<svg class="i" style="left:569.10px;top:580.70px" width="16.2" height="16.2" viewBox="0 0 16 16" fill="#1873b3"><path d="M8 15A7 7 0 1 1 8 1a7 7 0 0 1 0 14zm0 1A8 8 0 1 0 8 0a8 8 0 0 0 0 16z"/><path d="M8 3.5a.5.5 0 0 0-1 0V9a.5.5 0 0 0 .252.434l3.5 2a.5.5 0 0 0 .496-.868L8 8.71V3.5z"/></svg>
<span class="t" style="left:598.30px;top:578px;font-size:11.6px;transform:translateY(0.80px) scaleX(1.1495) rotate(.03deg);color:#1873b3;-webkit-text-stroke:0.12px currentColor;">Ouvert</span>
<span class="t" style="left:774.20px;top:580px;font-size:11.6px;transform:translateY(0.70px) scaleX(1.0855) rotate(.03deg);color:#0b1432;-webkit-text-stroke:0.12px currentColor;">700.00</span>
<span class="t" style="left:896.80px;top:580px;font-size:11.6px;transform:translateY(0.70px) scaleX(1.0692) rotate(.03deg);color:#0b1432;-webkit-text-stroke:0.12px currentColor;">0</span>
<svg class="i" style="left:86.30px;top:613.70px" width="12.6" height="12.6" viewBox="0 0 16 16" fill="#1c2740" ><path d="M11.742 10.344a6.5 6.5 0 1 0-1.397 1.398h-.001c.03.04.062.078.098.115l3.85 3.85a1 1 0 0 0 1.415-1.414l-3.85-3.85a1.007 1.007 0 0 0-.115-.1zM12 6.5a5.5 5.5 0 1 1-11 0 5.5 5.5 0 0 1 11 0z"/></svg>
<span class="t" style="left:119.40px;top:610px;font-size:11.6px;transform:translateY(0.50px) scaleX(1.1683) rotate(.03deg);color:#0b1432;-webkit-text-stroke:0.12px currentColor;">Titre restaurant</span>
<span class="t" style="left:417.00px;top:610px;font-size:11.6px;transform:translateY(0.50px) scaleX(0.9922) rotate(.03deg);color:#0b1432;-webkit-text-stroke:0.12px currentColor;">51240</span>
<span class="t" style="left:475.00px;top:609px;font-size:11.6px;transform:translateY(0.75px) scaleX(1.0988) rotate(.03deg);color:#0b1432;-webkit-text-stroke:0.12px currentColor;">12/05/23</span>
<svg class="i" style="left:569.10px;top:612.00px" width="16.2" height="16.2" viewBox="0 0 16 16" fill="#3f8f1f"><path d="M8 15A7 7 0 1 1 8 1a7 7 0 0 1 0 14zm0 1A8 8 0 1 0 8 0a8 8 0 0 0 0 16z"/><path d="M10.97 4.97a.235.235 0 0 0-.02.022L7.477 9.417 5.384 7.323a.75.75 0 0 0-1.06 1.06L6.97 11.03a.75.75 0 0 0 1.079-.02l3.992-4.99a.75.75 0 0 0-1.071-1.05z"/></svg>
<span class="t" style="left:598.30px;top:610px;font-size:11.6px;transform:translateY(0.70px) scaleX(1.1646) rotate(.03deg);color:#3f8f1f;-webkit-text-stroke:0.12px currentColor;">Acceptée</span>
<span class="t" style="left:776.20px;top:610px;font-size:11.6px;transform:translateY(0.70px) scaleX(1.0291) rotate(.03deg);color:#0b1432;-webkit-text-stroke:0.12px currentColor;">150.00</span>
<span class="t" style="left:867.20px;top:610px;font-size:11.6px;transform:translateY(0.70px) scaleX(1.0291) rotate(.03deg);color:#0b1432;-webkit-text-stroke:0.12px currentColor;">150.00</span>
<div class="b" style="left:665.00px;top:1018.30px;width:50.00px;height:24.30px;background:#f5f7fa;border-bottom:1px solid #8fa0b5"></div>
<span class="t" style="left:672.30px;top:1021px;font-size:12.6px;transform:translateY(0.30px) scaleX(0.9775) rotate(.03deg);color:#4d5560;">17</span>
<svg class="i" style="left:699.50px;top:1025.50px" width="10.5" height="10.5" viewBox="0 0 16 16" fill="#4d5560" stroke="#4d5560" stroke-width="0.7"><path fill-rule="evenodd" d="M1.646 4.646a.5.5 0 0 1 .708 0L8 10.293l5.646-5.647a.5.5 0 0 1 .708.708l-6 6a.5.5 0 0 1-.708 0l-6-6a.5.5 0 0 1 0-.708z"/></svg>
<div class="b" style="left:740.70px;top:1018.00px;width:25.00px;height:25.00px;border:1px solid #1f4b5c;border-radius:2px;background:#fff"></div>
<svg class="i" style="left:747.60px;top:1024.70px" width="11.4" height="11.4" viewBox="0 0 16 16" fill="#1f4b5c" stroke="#1f4b5c" stroke-width="1.1"><path fill-rule="evenodd" d="M15 8a.5.5 0 0 0-.5-.5H2.707l3.147-3.146a.5.5 0 1 0-.708-.708l-4 4a.5.5 0 0 0 0 .708l4 4a.5.5 0 0 0 .708-.708L2.707 8.500H14.500A.5.5 0 0 0 15 8z"/></svg>
<div class="b" style="left:788.80px;top:1018.00px;width:25.00px;height:25.00px;background:#cc0a27;border-radius:2px"></div>
<span class="t" style="left:798.30px;top:1021px;font-size:12.3px;transform:translateY(0.60px) scaleX(0.7306) rotate(.03deg);color:#fff;font-weight:700;">1</span>
<span class="t" style="left:825.50px;top:1021px;font-size:12.3px;transform:translateY(0.60px) scaleX(1.0959) rotate(.03deg);color:#4d5560;">2</span>
<span class="t" style="left:852.00px;top:1021px;font-size:12px;transform:translateY(0.60px) scaleX(0.8487) rotate(.03deg);color:#4d5560;">...</span>
<span class="t" style="left:881.00px;top:1021px;font-size:12.3px;transform:translateY(0.60px) scaleX(1.0082) rotate(.03deg);color:#4d5560;">12</span>
<div class="b" style="left:915.00px;top:1018.00px;width:24.00px;height:25.00px;border:1px solid #1f4b5c;border-radius:2px;background:#fff"></div>
<svg class="i" style="left:921.40px;top:1024.70px" width="11.4" height="11.4" viewBox="0 0 16 16" fill="#1f4b5c" stroke="#1f4b5c" stroke-width="1.1"><path fill-rule="evenodd" d="M1 8a.5.5 0 0 1 .5-.5h11.793l-3.147-3.146a.5.5 0 0 1 .708-.708l4 4a.5.5 0 0 1 0 .708l-4 4a.5.5 0 0 1-.708-.708L13.293 8.500H1.500A.5.5 0 0 1 1 8z"/></svg>
</section>
<section>
<div class="b" style="left:971.00px;top:250.00px;width:934.00px;height:642.70px;background:#fff"></div>
<span class="t" style="left:993.00px;top:267px;font-size:11.7px;transform:translateY(0.20px) scaleX(0.9591) rotate(.03deg);color:#43374b;-webkit-text-stroke:0.35px currentColor;">DEMANDES À TRAITER</span>
<div class="b" style="left:1656.00px;top:266.00px;width:76.50px;height:22.00px;border:1px solid #d8213f;border-radius:3px;background:#fff"></div>
<svg class="i" style="left:1661.80px;top:270.60px" width="12.4" height="12.4" viewBox="0 0 16 16" fill="#d8213f" ><path d="M.5 9.9a.5.5 0 0 1 .5.5v2.5a1 1 0 0 0 1 1h12a1 1 0 0 0 1-1v-2.5a.5.5 0 0 1 1 0v2.5a2 2 0 0 1-2 2H2a2 2 0 0 1-2-2v-2.5a.5.5 0 0 1 .5-.5z"/><path d="M7.646 1.146a.5.5 0 0 1 .708 0l3 3a.5.5 0 0 1-.708.708L8.500 2.707V11.5a.5.5 0 0 1-1 0V2.707L5.354 4.854a.5.5 0 1 1-.708-.708l3-3z"/></svg>
<span class="t" style="left:1679.30px;top:267px;font-size:12px;transform:translateY(0.30px) scaleX(0.9259) rotate(.03deg);color:#cf1838;font-weight:700;">Exporter</span>
<div class="b" style="left:1743.00px;top:266.00px;width:92.00px;height:22.00px;border:1px solid #5a6872;border-radius:3px;background:#fff"></div>
<div class="b" style="left:1751.10px;top:272.00px;width:2.70px;height:10.70px;background:#55636d"></div>
<div class="b" style="left:1755.15px;top:272.00px;width:2.70px;height:10.70px;background:#55636d"></div>
<div class="b" style="left:1759.20px;top:272.00px;width:2.70px;height:10.70px;background:#55636d"></div>
<span class="t" style="left:1767.00px;top:267px;font-size:12px;transform:translateY(0.30px) scaleX(0.9960) rotate(.03deg);color:#4f5d67;-webkit-text-stroke:0.4px currentColor;">Colonnes</span>
<svg class="i" style="left:1822.9px;top:275.8px" width="5.8" height="3.6" viewBox="0 0 7 4"><path d="M0 0h7L3.5 4z" fill="#55636d"/></svg>
<div class="b" style="left:1844.00px;top:266.00px;width:32.00px;height:22.00px;border:1px solid #5a6872;border-radius:3px;background:#fff"></div>
<svg class="i" style="left:1850.00px;top:270.70px" width="11.5" height="11.5" viewBox="0 0 16 16" fill="#55636d" ><path d="M3.612 15.443c-.386.198-.824-.149-.746-.592l.83-4.73L.173 6.765c-.329-.314-.158-.888.283-.95l4.898-.696L7.538.792c.197-.39.73-.39.927 0l2.184 4.327 4.898.696c.441.062.612.636.282.95l-3.522 3.356.83 4.73c.078.443-.36.79-.746.592L8 13.187l-4.389 2.256z"/></svg>
<svg class="i" style="left:1864.9px;top:275.8px" width="5.8" height="3.6" viewBox="0 0 7 4"><path d="M0 0h7L3.5 4z" fill="#55636d"/></svg>
<span class="t" style="left:1069.00px;top:299px;font-size:11.6px;transform:translateY(0.80px) scaleX(1.1882) rotate(.03deg);color:#1b1f2b;-webkit-text-stroke:0.3px currentColor;">Demandeur</span>
<span class="t" style="left:1249.00px;top:299px;font-size:11.6px;transform:translateY(0.80px) scaleX(1.1875) rotate(.03deg);color:#1b1f2b;-webkit-text-stroke:0.3px currentColor;">Date de la demande</span>
<span class="t" style="left:1424.80px;top:299px;font-size:11.6px;transform:translateY(0.80px) scaleX(1.1948) rotate(.03deg);color:#1b1f2b;-webkit-text-stroke:0.3px currentColor;">Statut</span>
<div class="b" style="left:990.00px;top:324.00px;width:899.00px;height:1.30px;background:#d8102f"></div>
<div class="b" style="left:990px;top:354px;width:899px;height:1px;background:rgba(174,183,194,0.55)"></div><div class="b" style="left:990px;top:355px;width:899px;height:1px;background:rgba(174,183,194,0.45)"></div>
<div class="b" style="left:990px;top:534px;width:899px;height:1px;background:rgba(174,183,194,0.10)"></div><div class="b" style="left:990px;top:535px;width:899px;height:1px;background:rgba(174,183,194,0.90)"></div>
<div class="b" style="left:990px;top:565px;width:899px;height:1px;background:rgba(174,183,194,1.00)"></div>
<div class="b" style="left:990px;top:595px;width:899px;height:1px;background:rgba(174,183,194,1.00)"></div>
<div class="b" style="left:990px;top:624px;width:899px;height:1px;background:rgba(174,183,194,0.10)"></div><div class="b" style="left:990px;top:625px;width:899px;height:1px;background:rgba(174,183,194,0.90)"></div>
<div class="b" style="left:990px;top:654px;width:899px;height:1px;background:rgba(174,183,194,0.20)"></div><div class="b" style="left:990px;top:655px;width:899px;height:1px;background:rgba(174,183,194,0.80)"></div>
<div class="b" style="left:990px;top:684px;width:899px;height:1px;background:rgba(174,183,194,0.20)"></div><div class="b" style="left:990px;top:685px;width:899px;height:1px;background:rgba(174,183,194,0.80)"></div>
<div class="b" style="left:990px;top:714px;width:899px;height:1px;background:rgba(174,183,194,0.20)"></div><div class="b" style="left:990px;top:715px;width:899px;height:1px;background:rgba(174,183,194,0.80)"></div>
<div class="b" style="left:990px;top:744px;width:899px;height:1px;background:rgba(174,183,194,0.10)"></div><div class="b" style="left:990px;top:745px;width:899px;height:1px;background:rgba(174,183,194,0.90)"></div>
<div class="b" style="left:990px;top:775px;width:899px;height:1px;background:rgba(174,183,194,1.00)"></div>
<div class="b" style="left:990px;top:805px;width:899px;height:1px;background:rgba(174,183,194,1.00)"></div>
<div class="b" style="left:990px;top:835px;width:899px;height:1px;background:rgba(174,183,194,0.50)"></div><div class="b" style="left:990px;top:836px;width:899px;height:1px;background:rgba(174,183,194,0.50)"></div>
<div class="b" style="left:990px;top:865px;width:899px;height:1px;background:rgba(174,183,194,0.20)"></div><div class="b" style="left:990px;top:866px;width:899px;height:1px;background:rgba(174,183,194,0.80)"></div>
<svg class="i" style="left:1004.90px;top:335.95px" width="12" height="7.6" viewBox="0 0 12 7.6"><path d="M6 0.6 L11.4 6.6 Q11.7 7.4 10.8 7.4 L1.2 7.4 Q0.3 7.4 0.6 6.6 Z" fill="#060e2b" stroke="#060e2b" stroke-width="0.8" stroke-linejoin="round"/></svg>
<span class="t" style="left:1027.20px;top:329px;font-size:11.6px;transform:translateY(0.75px) scaleX(1.2006) rotate(.03deg);color:#0b1432;-webkit-text-stroke:0.27px currentColor;">Allocation garde d'enfant</span>
<svg class="i" style="left:1004.90px;top:517.00px" width="12" height="7.6" viewBox="0 0 12 7.6"><path d="M6 7 L11.4 1 Q11.7 0.2 10.8 0.2 L1.2 0.2 Q0.3 0.2 0.6 1 Z" fill="#060e2b" stroke="#060e2b" stroke-width="0.8" stroke-linejoin="round"/></svg>
<span class="t" style="left:1027.20px;top:510px;font-size:11.6px;transform:translateY(0.80px) scaleX(1.1735) rotate(.03deg);color:#0b1432;-webkit-text-stroke:0.27px currentColor;">Allocation Naissance</span>
<svg class="i" style="left:1004.90px;top:547.10px" width="12" height="7.6" viewBox="0 0 12 7.6"><path d="M6 7 L11.4 1 Q11.7 0.2 10.8 0.2 L1.2 0.2 Q0.3 0.2 0.6 1 Z" fill="#060e2b" stroke="#060e2b" stroke-width="0.8" stroke-linejoin="round"/></svg>
<span class="t" style="left:1027.20px;top:540px;font-size:11.6px;transform:translateY(0.90px) scaleX(1.1806) rotate(.03deg);color:#0b1432;-webkit-text-stroke:0.27px currentColor;">Allocation rentrée scolaire</span>
<svg class="i" style="left:1004.90px;top:577.10px" width="12" height="7.6" viewBox="0 0 12 7.6"><path d="M6 7 L11.4 1 Q11.7 0.2 10.8 0.2 L1.2 0.2 Q0.3 0.2 0.6 1 Z" fill="#060e2b" stroke="#060e2b" stroke-width="0.8" stroke-linejoin="round"/></svg>
<span class="t" style="left:1027.20px;top:570px;font-size:11.6px;transform:translateY(0.90px) scaleX(1.2010) rotate(.03deg);color:#0b1432;-webkit-text-stroke:0.27px currentColor;">Allocation parent d'enfant handicapé - de 20ans</span>
<svg class="i" style="left:1004.90px;top:607.00px" width="12" height="7.6" viewBox="0 0 12 7.6"><path d="M6 7 L11.4 1 Q11.7 0.2 10.8 0.2 L1.2 0.2 Q0.3 0.2 0.6 1 Z" fill="#060e2b" stroke="#060e2b" stroke-width="0.8" stroke-linejoin="round"/></svg>
<span class="t" style="left:1027.20px;top:600px;font-size:11.6px;transform:translateY(0.80px) scaleX(1.1795) rotate(.03deg);color:#0b1432;-webkit-text-stroke:0.27px currentColor;">Allocation au frais de séjour en centre spécialisées pour enfants handicapés</span>
<svg class="i" style="left:1004.90px;top:636.90px" width="12" height="7.6" viewBox="0 0 12 7.6"><path d="M6 7 L11.4 1 Q11.7 0.2 10.8 0.2 L1.2 0.2 Q0.3 0.2 0.6 1 Z" fill="#060e2b" stroke="#060e2b" stroke-width="0.8" stroke-linejoin="round"/></svg>
<span class="t" style="left:1027.20px;top:630px;font-size:11.6px;transform:translateY(0.70px) scaleX(1.1269) rotate(.03deg);color:#0b1432;-webkit-text-stroke:0.27px currentColor;">Participation au CESU</span>
<svg class="i" style="left:1004.90px;top:666.90px" width="12" height="7.6" viewBox="0 0 12 7.6"><path d="M6 7 L11.4 1 Q11.7 0.2 10.8 0.2 L1.2 0.2 Q0.3 0.2 0.6 1 Z" fill="#060e2b" stroke="#060e2b" stroke-width="0.8" stroke-linejoin="round"/></svg>
<span class="t" style="left:1027.20px;top:660px;font-size:11.6px;transform:translateY(0.70px) scaleX(1.1794) rotate(.03deg);color:#0b1432;-webkit-text-stroke:0.27px currentColor;">Allocation de fin de carrière</span>
<svg class="i" style="left:1004.90px;top:696.90px" width="12" height="7.6" viewBox="0 0 12 7.6"><path d="M6 7 L11.4 1 Q11.7 0.2 10.8 0.2 L1.2 0.2 Q0.3 0.2 0.6 1 Z" fill="#060e2b" stroke="#060e2b" stroke-width="0.8" stroke-linejoin="round"/></svg>
<span class="t" style="left:1027.20px;top:690px;font-size:11.6px;transform:translateY(0.70px) scaleX(1.1834) rotate(.03deg);color:#0b1432;-webkit-text-stroke:0.27px currentColor;">Médaille d'honneur du travail</span>
<svg class="i" style="left:1004.90px;top:727.00px" width="12" height="7.6" viewBox="0 0 12 7.6"><path d="M6 7 L11.4 1 Q11.7 0.2 10.8 0.2 L1.2 0.2 Q0.3 0.2 0.6 1 Z" fill="#060e2b" stroke="#060e2b" stroke-width="0.8" stroke-linejoin="round"/></svg>
<span class="t" style="left:1027.20px;top:720px;font-size:11.6px;transform:translateY(0.80px) scaleX(1.1541) rotate(.03deg);color:#0b1432;-webkit-text-stroke:0.27px currentColor;">Aides au décès</span>
<svg class="i" style="left:1004.90px;top:757.10px" width="12" height="7.6" viewBox="0 0 12 7.6"><path d="M6 7 L11.4 1 Q11.7 0.2 10.8 0.2 L1.2 0.2 Q0.3 0.2 0.6 1 Z" fill="#060e2b" stroke="#060e2b" stroke-width="0.8" stroke-linejoin="round"/></svg>
<span class="t" style="left:1027.20px;top:750px;font-size:11.6px;transform:translateY(0.90px) scaleX(1.1458) rotate(.03deg);color:#0b1432;-webkit-text-stroke:0.27px currentColor;">Secours social</span>
<svg class="i" style="left:1004.90px;top:787.10px" width="12" height="7.6" viewBox="0 0 12 7.6"><path d="M6 7 L11.4 1 Q11.7 0.2 10.8 0.2 L1.2 0.2 Q0.3 0.2 0.6 1 Z" fill="#060e2b" stroke="#060e2b" stroke-width="0.8" stroke-linejoin="round"/></svg>
<span class="t" style="left:1027.20px;top:780px;font-size:11.6px;transform:translateY(0.90px) scaleX(1.1366) rotate(.03deg);color:#0b1432;-webkit-text-stroke:0.27px currentColor;">Prêts sociaux</span>
<svg class="i" style="left:1004.90px;top:817.60px" width="12" height="7.6" viewBox="0 0 12 7.6"><path d="M6 7 L11.4 1 Q11.7 0.2 10.8 0.2 L1.2 0.2 Q0.3 0.2 0.6 1 Z" fill="#060e2b" stroke="#060e2b" stroke-width="0.8" stroke-linejoin="round"/></svg>
<span class="t" style="left:1027.20px;top:811px;font-size:11.6px;transform:translateY(0.40px) scaleX(0.9436) rotate(.03deg);color:#0b1432;-webkit-text-stroke:0.27px currentColor;">PSC</span>
<svg class="i" style="left:1004.90px;top:847.90px" width="12" height="7.6" viewBox="0 0 12 7.6"><path d="M6 7 L11.4 1 Q11.7 0.2 10.8 0.2 L1.2 0.2 Q0.3 0.2 0.6 1 Z" fill="#060e2b" stroke="#060e2b" stroke-width="0.8" stroke-linejoin="round"/></svg>
<span class="t" style="left:1027.20px;top:841px;font-size:11.6px;transform:translateY(0.70px) scaleX(1.1843) rotate(.03deg);color:#0b1432;-webkit-text-stroke:0.27px currentColor;">Titre restaurant</span>
<div class="sh" style="left:1028px;top:356.2px;width:29.50px;height:28.40px"></div>
<div class="sh" style="left:1062px;top:356.2px;width:174.50px;height:28.40px"></div>
<div class="sh" style="left:1239px;top:356.2px;width:169.80px;height:28.40px"></div>
<div class="sh" style="left:1411.2px;top:356.2px;width:477.60px;height:28.40px"></div>
<div class="sh" style="left:1028px;top:415.4px;width:29.50px;height:29.20px"></div>
<div class="sh" style="left:1062px;top:415.4px;width:174.50px;height:29.20px"></div>
<div class="sh" style="left:1239px;top:415.4px;width:169.80px;height:29.20px"></div>
<div class="sh" style="left:1411.2px;top:415.4px;width:477.60px;height:29.20px"></div>
<div class="sh" style="left:1028px;top:475.1px;width:29.50px;height:29.50px"></div>
<div class="sh" style="left:1062px;top:475.1px;width:174.50px;height:29.50px"></div>
<div class="sh" style="left:1239px;top:475.1px;width:169.80px;height:29.50px"></div>
<div class="sh" style="left:1411.2px;top:475.1px;width:477.60px;height:29.50px"></div>
<svg class="i" style="left:1036.70px;top:363.50px" width="12.6" height="12.6" viewBox="0 0 16 16" fill="#1c2740" ><path d="M11.742 10.344a6.5 6.5 0 1 0-1.397 1.398h-.001c.03.04.062.078.098.115l3.85 3.85a1 1 0 0 0 1.415-1.414l-3.85-3.85a1.007 1.007 0 0 0-.115-.1zM12 6.5a5.5 5.5 0 1 1-11 0 5.5 5.5 0 0 1 11 0z"/></svg>
<span class="t" style="left:1069.40px;top:359px;font-size:11.6px;transform:translateY(0.80px) scaleX(1.1168) rotate(.03deg);color:#0b1432;-webkit-text-stroke:0.12px currentColor;">M.Durand</span>
<span class="t" style="left:1248.80px;top:359px;font-size:11.6px;transform:translateY(0.80px) scaleX(1.0966) rotate(.03deg);color:#0b1432;-webkit-text-stroke:0.12px currentColor;">15/06/23</span>
<svg class="i" style="left:1424.80px;top:362.50px" width="16.2" height="16.2" viewBox="0 0 16 16" fill="#1873b3"><path d="M8 15A7 7 0 1 1 8 1a7 7 0 0 1 0 14zm0 1A8 8 0 1 0 8 0a8 8 0 0 0 0 16z"/><path d="M8 3.5a.5.5 0 0 0-1 0V9a.5.5 0 0 0 .252.434l3.5 2a.5.5 0 0 0 .496-.868L8 8.71V3.5z"/></svg>
<span class="t" style="left:1453.00px;top:360px;font-size:11.6px;transform:translateY(0.50px) scaleX(1.1352) rotate(.03deg);color:#1873b3;-webkit-text-stroke:0.12px currentColor;">Ouvert</span>
<svg class="i" style="left:1036.70px;top:393.50px" width="12.6" height="12.6" viewBox="0 0 16 16" fill="#1c2740" ><path d="M11.742 10.344a6.5 6.5 0 1 0-1.397 1.398h-.001c.03.04.062.078.098.115l3.85 3.85a1 1 0 0 0 1.415-1.414l-3.85-3.85a1.007 1.007 0 0 0-.115-.1zM12 6.5a5.5 5.5 0 1 1-11 0 5.5 5.5 0 0 1 11 0z"/></svg>
<span class="t" style="left:1069.40px;top:389px;font-size:11.6px;transform:translateY(0.80px) scaleX(1.0473) rotate(.03deg);color:#0b1432;-webkit-text-stroke:0.12px currentColor;">J. Doe</span>
<span class="t" style="left:1248.80px;top:389px;font-size:11.6px;transform:translateY(0.80px) scaleX(1.0966) rotate(.03deg);color:#0b1432;-webkit-text-stroke:0.12px currentColor;">25/06/23</span>
<svg class="i" style="left:1424.80px;top:392.50px" width="16.2" height="16.2" viewBox="0 0 16 16" fill="#1873b3"><path d="M8 15A7 7 0 1 1 8 1a7 7 0 0 1 0 14zm0 1A8 8 0 1 0 8 0a8 8 0 0 0 0 16z"/><path d="M8 3.5a.5.5 0 0 0-1 0V9a.5.5 0 0 0 .252.434l3.5 2a.5.5 0 0 0 .496-.868L8 8.71V3.5z"/></svg>
<span class="t" style="left:1453.00px;top:390px;font-size:11.6px;transform:translateY(0.50px) scaleX(1.1352) rotate(.03deg);color:#1873b3;-webkit-text-stroke:0.12px currentColor;">Ouvert</span>
<svg class="i" style="left:1036.70px;top:423.50px" width="12.6" height="12.6" viewBox="0 0 16 16" fill="#1c2740" ><path d="M11.742 10.344a6.5 6.5 0 1 0-1.397 1.398h-.001c.03.04.062.078.098.115l3.85 3.85a1 1 0 0 0 1.415-1.414l-3.85-3.85a1.007 1.007 0 0 0-.115-.1zM12 6.5a5.5 5.5 0 1 1-11 0 5.5 5.5 0 0 1 11 0z"/></svg>
<span class="t" style="left:1069.40px;top:419px;font-size:11.6px;transform:translateY(0.80px) scaleX(1.1317) rotate(.03deg);color:#0b1432;-webkit-text-stroke:0.12px currentColor;">P. Guichard</span>
<span class="t" style="left:1248.80px;top:418px;font-size:11.6px;transform:translateY(0.80px) scaleX(1.0966) rotate(.03deg);color:#0b1432;-webkit-text-stroke:0.12px currentColor;">05/06/23</span>
<svg class="i" style="left:1424.80px;top:422.50px" width="16.2" height="16.2" viewBox="0 0 16 16" fill="#1873b3"><path d="M8 15A7 7 0 1 1 8 1a7 7 0 0 1 0 14zm0 1A8 8 0 1 0 8 0a8 8 0 0 0 0 16z"/><path d="M8 3.5a.5.5 0 0 0-1 0V9a.5.5 0 0 0 .252.434l3.5 2a.5.5 0 0 0 .496-.868L8 8.71V3.5z"/></svg>
<span class="t" style="left:1453.00px;top:420px;font-size:11.6px;transform:translateY(0.50px) scaleX(1.1352) rotate(.03deg);color:#1873b3;-webkit-text-stroke:0.12px currentColor;">Ouvert</span>
<svg class="i" style="left:1036.70px;top:453.50px" width="12.6" height="12.6" viewBox="0 0 16 16" fill="#1c2740" ><path d="M11.742 10.344a6.5 6.5 0 1 0-1.397 1.398h-.001c.03.04.062.078.098.115l3.85 3.85a1 1 0 0 0 1.415-1.414l-3.85-3.85a1.007 1.007 0 0 0-.115-.1zM12 6.5a5.5 5.5 0 1 1-11 0 5.5 5.5 0 0 1 11 0z"/></svg>
<span class="t" style="left:1069.40px;top:449px;font-size:11.6px;transform:translateY(0.80px) scaleX(1.0755) rotate(.03deg);color:#0b1432;-webkit-text-stroke:0.12px currentColor;">S. Gillaut</span>
<span class="t" style="left:1248.80px;top:449px;font-size:11.6px;transform:translateY(0.80px) scaleX(1.0966) rotate(.03deg);color:#0b1432;-webkit-text-stroke:0.12px currentColor;">15/05/23</span>
<svg class="i" style="left:1424.80px;top:452.50px" width="16.2" height="16.2" viewBox="0 0 16 16" fill="#1873b3"><path d="M8 15A7 7 0 1 1 8 1a7 7 0 0 1 0 14zm0 1A8 8 0 1 0 8 0a8 8 0 0 0 0 16z"/><path d="M8 3.5a.5.5 0 0 0-1 0V9a.5.5 0 0 0 .252.434l3.5 2a.5.5 0 0 0 .496-.868L8 8.71V3.5z"/></svg>
<span class="t" style="left:1453.00px;top:450px;font-size:11.6px;transform:translateY(0.50px) scaleX(1.1352) rotate(.03deg);color:#1873b3;-webkit-text-stroke:0.12px currentColor;">Ouvert</span>
<svg class="i" style="left:1036.70px;top:484.10px" width="12.6" height="12.6" viewBox="0 0 16 16" fill="#1c2740" ><path d="M11.742 10.344a6.5 6.5 0 1 0-1.397 1.398h-.001c.03.04.062.078.098.115l3.85 3.85a1 1 0 0 0 1.415-1.414l-3.85-3.85a1.007 1.007 0 0 0-.115-.1zM12 6.5a5.5 5.5 0 1 1-11 0 5.5 5.5 0 0 1 11 0z"/></svg>
<span class="t" style="left:1069.40px;top:480px;font-size:11.6px;transform:translateY(0.50px) scaleX(1.0953) rotate(.03deg);color:#0b1432;-webkit-text-stroke:0.12px currentColor;">Mike Podka</span>
<span class="t" style="left:1248.80px;top:479px;font-size:11.6px;transform:translateY(0.80px) scaleX(1.0966) rotate(.03deg);color:#0b1432;-webkit-text-stroke:0.12px currentColor;">12/05/23</span>
<svg class="i" style="left:1424.80px;top:482.90px" width="16.2" height="16.2" viewBox="0 0 16 16" fill="#1873b3"><path d="M8 15A7 7 0 1 1 8 1a7 7 0 0 1 0 14zm0 1A8 8 0 1 0 8 0a8 8 0 0 0 0 16z"/><path d="M8 3.5a.5.5 0 0 0-1 0V9a.5.5 0 0 0 .252.434l3.5 2a.5.5 0 0 0 .496-.868L8 8.71V3.5z"/></svg>
<span class="t" style="left:1453.00px;top:480px;font-size:11.6px;transform:translateY(0.50px) scaleX(1.1352) rotate(.03deg);color:#1873b3;-webkit-text-stroke:0.12px currentColor;">Ouvert</span>
</section>
</div>
</body></html>
